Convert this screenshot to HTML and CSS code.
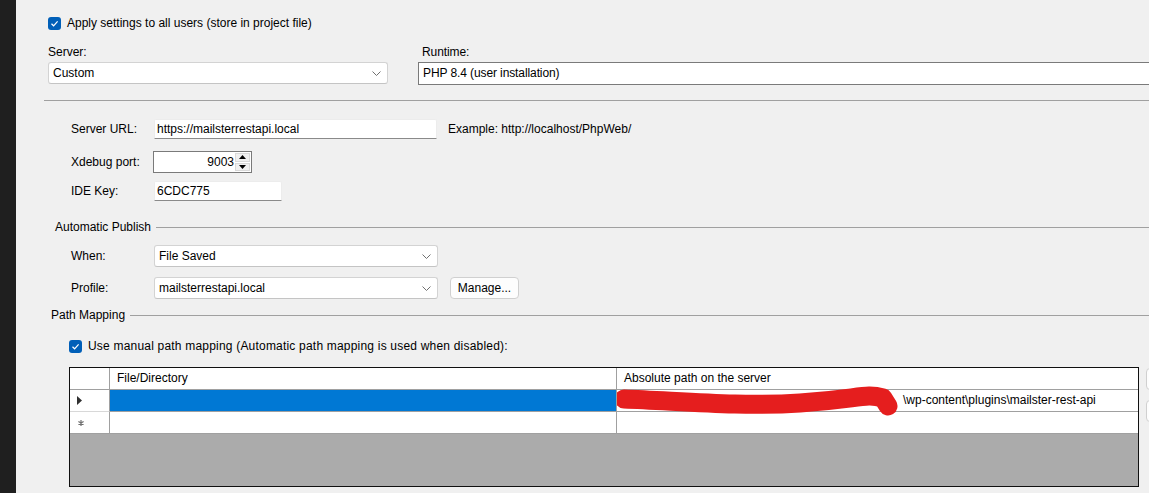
FILE: index.html
```html
<!DOCTYPE html>
<html>
<head>
<meta charset="utf-8">
<link rel="stylesheet" href="styles.css">
</head>
<body>
<div class="app">
  <div class="sidebar"></div>
  <div class="main">
    <div class="check-row top-check">
      <span class="checkbox"><svg viewBox="0 0 13 13" width="13" height="13"><path d="M3.5 6.8 L5.6 8.8 L9.6 4.4" fill="none" stroke="#fff" stroke-width="1.2"/></svg></span>
      <span class="label">Apply settings to all users (store in project file)</span>
    </div>

    <div class="server-runtime">
      <div class="server-col">
        <div class="label field-label">Server:</div>
        <div class="select select-wide">
          <span>Custom</span>
          <svg class="chev" viewBox="0 0 9 5" width="9" height="5"><path d="M0.5 0.5 L4.5 4.5 L8.5 0.5" fill="none" stroke="#707070" stroke-width="1"/></svg>
        </div>
      </div>
      <div class="runtime-col">
        <div class="classic-label">Runtime:</div>
        <div class="classic-box">PHP 8.4 (user installation)</div>
      </div>
    </div>

    <div class="separator"></div>

    <div class="form-row row-url">
      <div class="row-label">Server URL:</div>
      <div class="textbox tb-url">https://mailsterrestapi.local</div>
      <div class="hint">Example: http://localhost/PhpWeb/</div>
    </div>

    <div class="form-row row-port">
      <div class="row-label">Xdebug port:</div>
      <div class="numeric">
        <span class="num-value">9003</span>
        <span class="spin">
          <span class="spin-btn"><svg viewBox="0 0 7 4" width="7" height="4"><path d="M0 4 L3.5 0 L7 4 Z" fill="#000"/></svg></span>
          <span class="spin-btn"><svg viewBox="0 0 7 4" width="7" height="4"><path d="M0 0 L3.5 4 L7 0 Z" fill="#000"/></svg></span>
        </span>
      </div>
    </div>

    <div class="form-row row-key">
      <div class="row-label">IDE Key:</div>
      <div class="textbox tb-key">6CDC775</div>
    </div>

    <div class="group-head gh-publish">
      <span class="label">Automatic Publish</span>
      <span class="group-line"></span>
    </div>

    <div class="form-row row-when">
      <div class="row-label">When:</div>
      <div class="select select-form">
        <span>File Saved</span>
        <svg class="chev" viewBox="0 0 9 5" width="9" height="5"><path d="M0.5 0.5 L4.5 4.5 L8.5 0.5" fill="none" stroke="#707070" stroke-width="1"/></svg>
      </div>
    </div>

    <div class="form-row row-profile">
      <div class="row-label">Profile:</div>
      <div class="select select-form">
        <span>mailsterrestapi.local</span>
        <svg class="chev" viewBox="0 0 9 5" width="9" height="5"><path d="M0.5 0.5 L4.5 4.5 L8.5 0.5" fill="none" stroke="#707070" stroke-width="1"/></svg>
      </div>
      <div class="button">Manage...</div>
    </div>

    <div class="group-head gh-path">
      <span class="label">Path Mapping</span>
      <span class="group-line"></span>
    </div>

    <div class="check-row manual-check">
      <span class="checkbox"><svg viewBox="0 0 13 13" width="13" height="13"><path d="M3.5 6.8 L5.6 8.8 L9.6 4.4" fill="none" stroke="#fff" stroke-width="1.2"/></svg></span>
      <span class="label wide-label">Use manual path mapping (Automatic path mapping is used when disabled):</span>
    </div>

    <div class="grid-wrap">
      <div class="grid">
        <div class="gh corner"></div>
        <div class="gh ch1">File/Directory</div>
        <div class="gh ch2">Absolute path on the server</div>

        <div class="rh rh1"><svg viewBox="0 0 5 9" width="5" height="9"><path d="M0 0 L5 4.5 L0 9 Z" fill="#303030"/></svg></div>
        <div class="cell selected"></div>
        <div class="cell path-cell">
          <span class="path-text">\wp-content\plugins\mailster-rest-api</span>
          <svg class="scribble" viewBox="0 0 300 45" width="300" height="45"><path d="M7 19 C 63 21, 123 27, 183 23 S 248 13, 266 18 L 271 26" fill="none" stroke="#e51e1e" stroke-width="19" stroke-linecap="round" stroke-linejoin="round"/></svg>
        </div>

        <div class="rh rh2"><svg viewBox="0 0 6 6" width="6" height="6"><path d="M3 0 V6 M0.4 1.5 L5.6 4.5 M0.4 4.5 L5.6 1.5" stroke="#707070" stroke-width="1.2"/></svg></div>
        <div class="cell"></div>
        <div class="cell"></div>

        <div class="empty"></div>
      </div>
      <div class="side-buttons">
        <div class="side-btn"></div>
        <div class="side-btn"></div>
      </div>
    </div>
  </div>
</div>
</body>
</html>
```

FILE: styles.css
```css
html, body {
  margin: 0;
  padding: 0;
  background: #f0f0f0;
  width: 1149px;
  height: 493px;
  overflow: hidden;
}

body {
  font-family: "Liberation Sans", Arial, sans-serif;
  font-size: 12px;
  color: #000;
}

.app {
  display: flex;
  height: 493px;
}

.sidebar {
  width: 16px;
  flex: none;
  background: #1f1f1f;
}

.main {
  flex: 1;
  min-width: 0;
  overflow: hidden;
}

.label {
  white-space: nowrap;
}

/* checkboxes */
.check-row {
  display: flex;
  align-items: center;
  height: 14px;
}

.top-check {
  margin: 16px 0 0 32px;
}

.manual-check {
  margin: 17px 0 0 53px;
}

.wide-label {
  letter-spacing: 0.2px;
}

.checkbox {
  width: 13px;
  height: 13px;
  background: #005fb8;
  border-radius: 3px;
  display: flex;
  flex: none;
  margin-right: 6px;
}

/* server / runtime */
.server-runtime {
  display: flex;
  margin-top: 15px;
}

.server-col {
  margin-left: 32px;
  width: 340px;
  flex: none;
}

.field-label {
  height: 17px;
  line-height: 14px;
}

.select {
  height: 22px;
  box-sizing: border-box;
  background: #fff;
  border: 1px solid #d3d3d3;
  border-bottom-color: #c4c4c4;
  border-radius: 3px;
  display: flex;
  align-items: center;
  justify-content: space-between;
  padding: 0 4px 0 4px;
  white-space: nowrap;
}

.select-wide {
  width: 340px;
}

.chev {
  margin-right: 2px;
}

.runtime-col {
  margin-left: 30px;
  flex: 1;
  margin-right: -4px;
}

.classic-label {
  font-size: 12px;
  letter-spacing: -0.1px;
  height: 17px;
  line-height: 14px;
  padding-left: 4px;
}

.classic-box {
  height: 23px;
  box-sizing: border-box;
  background: #fff;
  border: 1px solid #7a7a7a;
  font-size: 12px;
  letter-spacing: -0.1px;
  line-height: 21px;
  padding-left: 4px;
}

.separator {
  margin: 15px 0 0 28px;
  border-top: 1px solid #a0a0a0;
}

/* form rows */
.form-row {
  display: flex;
  align-items: center;
  margin-left: 55px;
}

.row-label {
  width: 83px;
  flex: none;
  white-space: nowrap;
}

.row-url {
  margin-top: 18px;
  height: 20px;
}

.row-port {
  margin-top: 12px;
  height: 22px;
}

.row-key {
  margin-top: 8px;
  height: 20px;
}

.row-when {
  margin-top: 11px;
  height: 22px;
}

.row-profile {
  margin-top: 10px;
  height: 22px;
}

.textbox {
  height: 20px;
  box-sizing: border-box;
  background: #fff;
  border: 1px solid #ececec;
  border-bottom: 1px solid #8a8a8a;
  border-radius: 2px 2px 0 0;
  line-height: 18px;
  padding-left: 2px;
  white-space: nowrap;
}

.tb-url {
  width: 283px;
}

.tb-key {
  width: 128px;
}

.hint {
  margin-left: 11px;
  white-space: nowrap;
}

.numeric {
  margin-left: -1px;
  width: 99px;
  height: 22px;
  box-sizing: border-box;
  border: 1px solid #7a7a7a;
  background: #fff;
  display: flex;
  align-items: stretch;
}

.num-value {
  flex: 1;
  text-align: right;
  line-height: 20px;
  padding-right: 1px;
}

.spin {
  width: 15px;
  display: flex;
  flex-direction: column;
  padding: 1px 1px 1px 0;
  gap: 1px;
}

.spin-btn {
  flex: 1;
  background: #f0f0f0;
  border: 1px solid #d9d9d9;
  display: flex;
  align-items: center;
  justify-content: center;
}

.select-form {
  width: 284px;
}

.button {
  margin-left: 12px;
  width: 69px;
  height: 22px;
  box-sizing: border-box;
  background: #fdfdfd;
  border: 1px solid #d0d0d0;
  border-radius: 4px;
  display: flex;
  align-items: center;
  justify-content: center;
}

/* group headers */
.group-head {
  display: flex;
  align-items: center;
  height: 14px;
}

.gh-publish {
  margin: 19px 0 0 39px;
}

.gh-path {
  margin: 9px 0 0 35px;
}

.group-line {
  flex: 1;
  border-top: 1px solid #a0a0a0;
  margin-left: 5px;
}

/* grid */
.grid-wrap {
  display: flex;
  margin: 14px 0 0 53px;
}

.grid {
  width: 1070px;
  height: 120px;
  box-sizing: border-box;
  border: 1px solid #101010;
  background: #ababab;
  display: grid;
  grid-template-columns: 40px 507px 521px;
  grid-template-rows: 22px 22px 22px 1fr;
  flex: none;
}

.gh {
  background: #fff;
  border-right: 1px solid #a0a0a0;
  border-bottom: 1px solid #a0a0a0;
  line-height: 21px;
  padding-left: 7px;
  white-space: nowrap;
}

.ch2 {
  border-right: none;
}

.rh {
  background: #fff;
  border-right: 1px solid #a0a0a0;
  border-bottom: 1px solid #d8d8d8;
  display: flex;
  align-items: center;
  padding-left: 7px;
}

.rh2 {
  border-bottom-color: #a0a0a0;
  padding-left: 8px;
}

.cell {
  background: #fff;
  border-right: 1px solid #a0a0a0;
  border-bottom: 1px solid #a0a0a0;
  white-space: nowrap;
  line-height: 21px;
}

.cell:nth-child(3n) {
  border-right: none;
}

.selected {
  background: #0078d4;
}

.path-cell {
  position: relative;
  padding-left: 286px;
}

.scribble {
  position: absolute;
  left: 0;
  top: -10px;
  z-index: 2;
  pointer-events: none;
}

.empty {
  grid-column: 1 / 4;
}

.side-buttons {
  display: flex;
  flex-direction: column;
  gap: 10px;
  margin-left: 7px;
  margin-top: 1px;
}

.side-btn {
  width: 30px;
  height: 22px;
  box-sizing: border-box;
  background: #fdfdfd;
  border: 1px solid #d0d0d0;
  border-radius: 4px;
}
```
